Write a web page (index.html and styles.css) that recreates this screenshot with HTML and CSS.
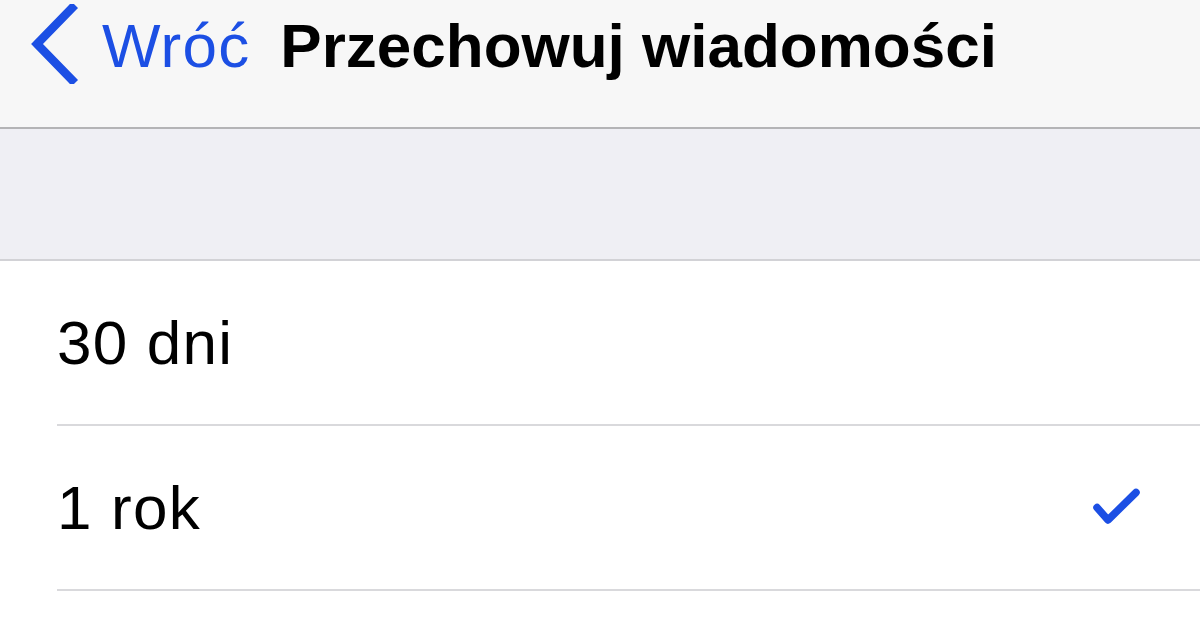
FILE: index.html
```html
<!DOCTYPE html>
<html lang="pl">
<head>
    <meta charset="UTF-8">
    <meta name="viewport" content="width=device-width, initial-scale=1.0">
    <title>Przechowuj wiadomości</title>
    <link rel="stylesheet" href="styles.css">
</head>
<body>

    <!-- Pasek nawigacji -->
    <header class="nav-bar">
        <a class="back" href="#">
            <svg class="back-chevron" width="50" height="80" viewBox="0 0 50 80">
                <polyline points="43,4 8,40 43,76" fill="none" stroke="currentColor" stroke-width="8.5" stroke-linecap="square" stroke-linejoin="miter"/>
            </svg>
            <span class="back-label">Wróć</span>
        </a>
        <h1 class="nav-title">Przechowuj wiadomości</h1>
    </header>

    <div class="group-header"></div>

    <ul class="options">
        <li class="option">
            <span class="option-label">30 dni</span>
        </li>
        <li class="option selected">
            <span class="option-label">1 rok</span>
            <svg class="check" width="50" height="40" viewBox="0 0 50 40">
                <polyline points="5,19.5 16,32 44,4.5" fill="none" stroke="currentColor" stroke-width="7.5" stroke-linecap="round" stroke-linejoin="round"/>
            </svg>
        </li>
    </ul>

</body>
</html>
```

FILE: styles.css
```css
/* Podstawa */
body {
    font-family: 'Liberation Sans', Arial, sans-serif;
    margin: 0;
    padding: 0;
    background-color: #fff;
    color: #000;
    overflow: hidden;
}

/* Pasek nawigacji */
.nav-bar {
    height: 127px;
    background-color: #f7f7f7;
    border-bottom: 2px solid #b4b4b6;
    display: flex;
    align-items: center;
    padding-left: 29px;
}

.back {
    display: flex;
    align-items: center;
    color: #1c4fe4;
    text-decoration: none;
    margin-top: -40px;
}

.back-chevron {
    display: block;
}

.back-label {
    font-size: 62px;
    margin-left: 23px;
    letter-spacing: 1.2px;
    margin-top: 4px;
}

.nav-title {
    margin: -36px 0 0 30px;
    font-size: 62px;
    font-weight: bold;
}

/* Szary odstęp nad listą */
.group-header {
    height: 130px;
    background-color: #efeff4;
    border-bottom: 2px solid #d2d2d6;
}

/* Lista opcji */
.options {
    list-style: none;
    margin: 0;
    padding: 0 0 0 57px;
}

.option {
    height: 163px;
    display: flex;
    align-items: center;
    border-bottom: 2px solid #d9d9dc;
    padding-right: 58px;
}

.option-label {
    font-size: 62px;
    letter-spacing: 1.2px;
    flex: 1;
}

.check {
    color: #1c4fe4;
    display: block;
}
```
